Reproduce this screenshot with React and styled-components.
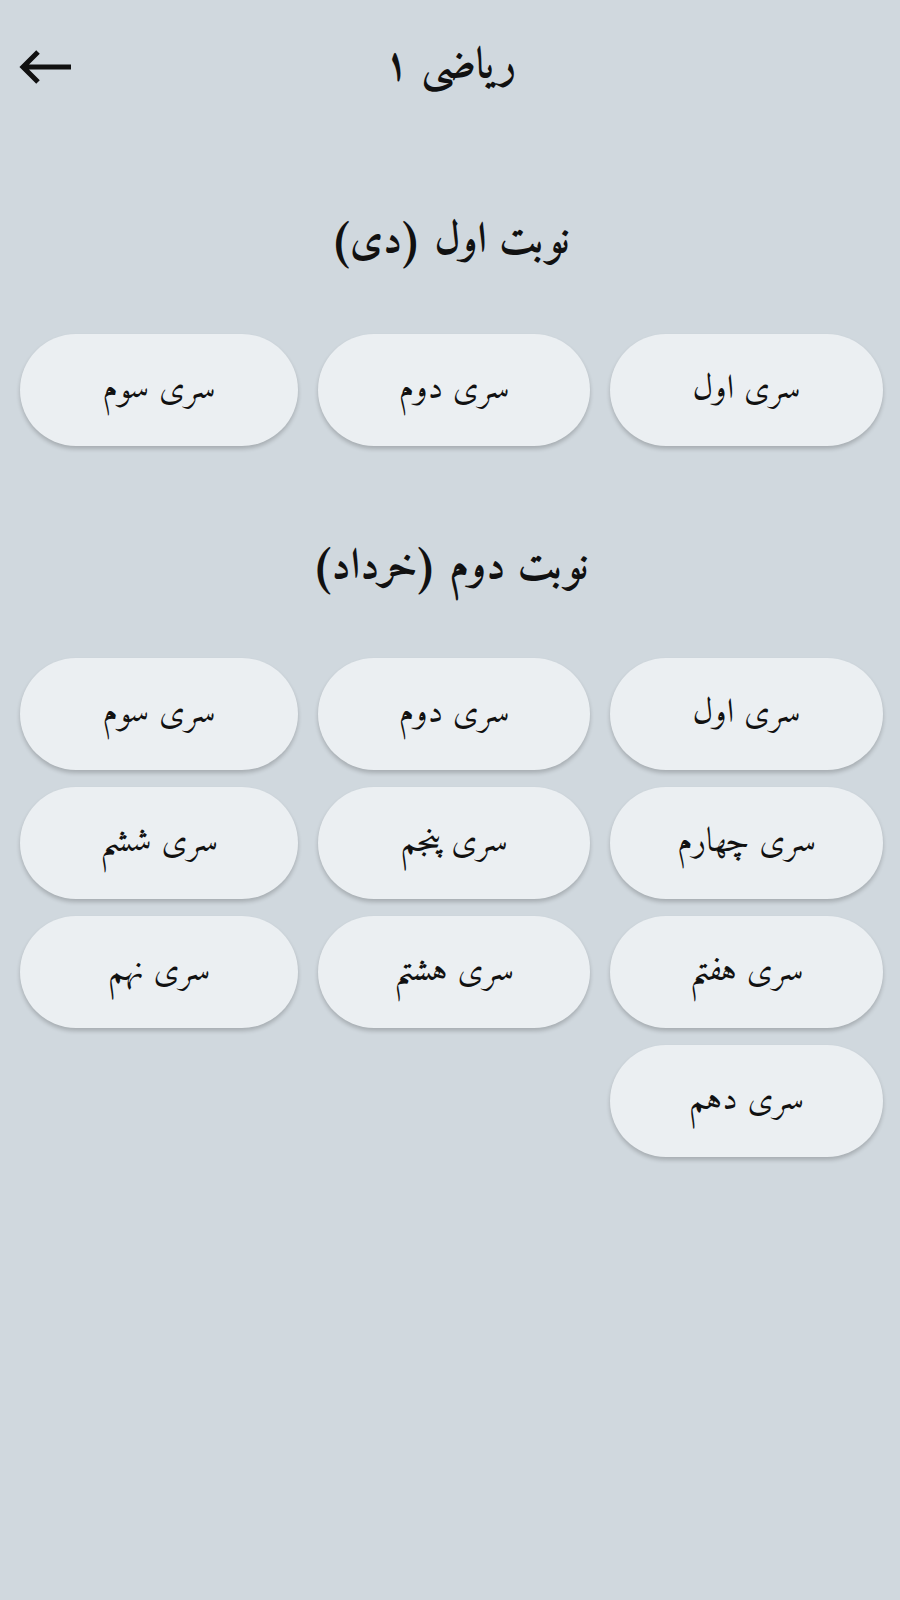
import React from "react";
import styled, { createGlobalStyle } from "styled-components";

const Global = createGlobalStyle`
  html, body { margin: 0; padding: 0; background: #d0d8de; }
  body { font-family: "Amiri", "Noto Naskh Arabic", "DejaVu Sans", serif; color: #111; }
`;

const Page = styled.div`
  width: 900px;
  min-height: 1600px;
  background: #d0d8de;
  direction: rtl;
`;

const Header = styled.header`
  position: relative;
  height: 134px;
  display: flex;
  align-items: center;
  justify-content: center;
`;

const BackButton = styled.button`
  position: absolute;
  left: 18px;
  top: 48px;
  width: 56px;
  height: 38px;
  padding: 0;
  border: 0;
  background: transparent;
  display: flex;
  align-items: center;
  justify-content: center;
`;

const Title = styled.h1`
  margin: 0;
  font-size: 43px;
  line-height: 60px;
  font-weight: 700;
`;

const Heading = styled.h2`
  margin: ${(p) => p.$top}px 0 0;
  text-align: center;
  line-height: 60px;
  font-size: 43px;
  font-weight: 700;
`;

const Grid = styled.div`
  display: grid;
  grid-template-columns: 273px 272px 278px;
  column-gap: 20px;
  row-gap: 17px;
  padding: 0 17px 0 20px;
  margin-top: ${(p) => p.$top}px;
`;

const Pill = styled.button`
  height: 112px;
  border: 0;
  border-radius: 56px;
  background: #ebeff2;
  box-shadow: 0 3px 4px rgba(0, 0, 0, 0.2);
  font-family: inherit;
  font-size: 34px;
  color: #111;
  display: flex;
  align-items: center;
  justify-content: center;
`;

const first = ["سری اول", "سری دوم", "سری سوم"];
const second = [
  "سری اول",
  "سری دوم",
  "سری سوم",
  "سری چهارم",
  "سری پنجم",
  "سری ششم",
  "سری هفتم",
  "سری هشتم",
  "سری نهم",
  "سری دهم",
];

export default function App() {
  return (
    <Page>
      <Global />
      <Header>
        <BackButton aria-label="back">
          <svg width="54" height="36" viewBox="0 0 54 36" fill="none">
            <path
              d="M4 18 H52 M19 3 L4 18 L19 33"
              stroke="#111"
              strokeWidth="5"
              strokeLinecap="butt"
              strokeLinejoin="miter"
            />
          </svg>
        </BackButton>
        <Title>ریاضی ۱</Title>
      </Header>
      <Heading $top={78}>نوبت اول (دی)</Heading>
      <Grid $top={62}>
        {first.map((t) => (
          <Pill key={t}>{t}</Pill>
        ))}
      </Grid>
      <Heading $top={92}>نوبت دوم (خرداد)</Heading>
      <Grid $top={60}>
        {second.map((t) => (
          <Pill key={t}>{t}</Pill>
        ))}
      </Grid>
    </Page>
  );
}
